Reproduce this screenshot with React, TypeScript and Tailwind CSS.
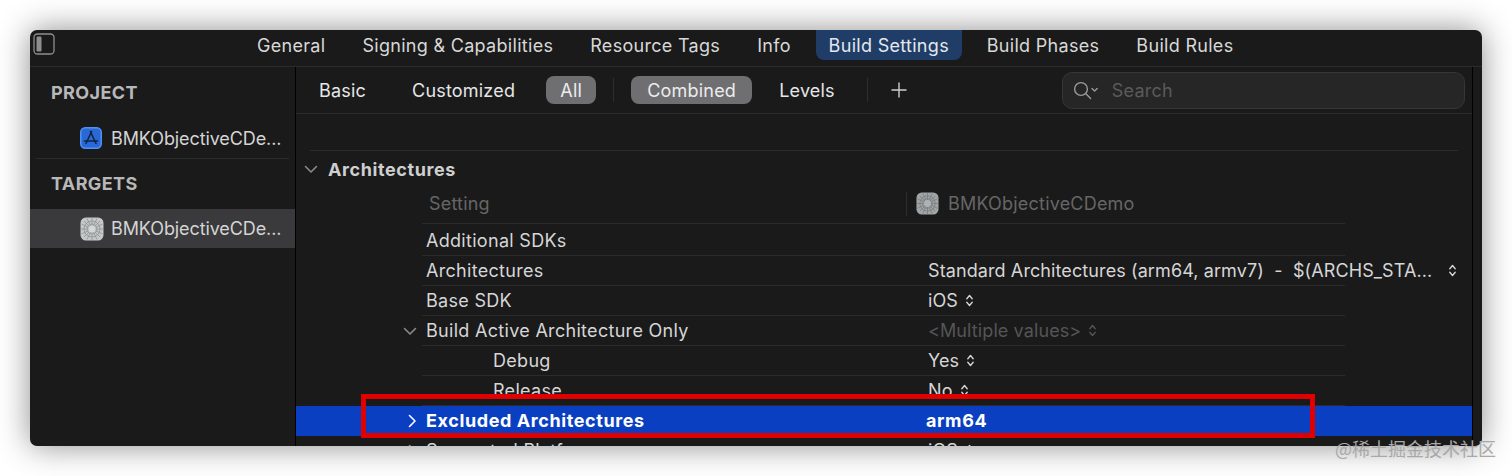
const tabs = ['General', 'Signing & Capabilities', 'Resource Tags', 'Info', 'Build Settings', 'Build Phases', 'Build Rules'];

function UpDown({ className }: { className?: string }) {
  return (
    <svg viewBox="0 0 10 16" className={`h-[15px] w-[9px] shrink-0 ${className ?? ''}`} fill="none" stroke="currentColor" strokeWidth="1.5" strokeLinecap="round" strokeLinejoin="round">
      <path d="M2 6l3-3.5L8 6" />
      <path d="M2 10l3 3.5L8 10" />
    </svg>
  );
}

function Chevron({ open, className }: { open?: boolean; className?: string }) {
  return (
    <svg viewBox="0 0 14 14" className={`h-[14px] w-[14px] ${className ?? ''}`} fill="none" stroke="currentColor" strokeWidth="1.6" strokeLinecap="round" strokeLinejoin="round">
      {open ? <path d="M1.5 4.5L7 10l5.5-5.5" /> : <path d="M4.5 1.5L10 7l-5.5 5.5" />}
    </svg>
  );
}

function TargetIcon({ className }: { className?: string }) {
  return (
    <svg viewBox="0 0 24 24" className={className}>
      <rect x="0.5" y="0.5" width="23" height="23" rx="5.5" fill="#c5c8c9" />
      <g fill="none" stroke="#8f9496" strokeWidth="0.8">
        <circle cx="12" cy="12" r="8" />
        <circle cx="12" cy="12" r="5" />
        <circle cx="12" cy="12" r="2.4" />
        <path d="M12 1v22M1 12h22M4 4l16 16M20 4L4 20M7 1.5l10 21M17 1.5l-10 21M1.5 7l21 10M1.5 17l21-10" />
      </g>
      <circle cx="12" cy="12" r="3.6" fill="#d5d8d9" />
    </svg>
  );
}

function AppIcon() {
  return (
    <svg viewBox="0 0 22 22" className="h-[22px] w-[22px] shrink-0">
      <rect x="0.75" y="0.75" width="20.5" height="20.5" rx="4.5" fill="#2a68d8" stroke="#4f93f2" strokeWidth="1.5" />
      <g fill="none" stroke="#10233f" strokeWidth="1.5" strokeLinecap="round">
        <path d="M11.6 4.5L6 16.5" />
        <path d="M10.4 4.5L16 16.5" />
        <path d="M4.5 14h13" />
      </g>
    </svg>
  );
}

function PanelIcon() {
  return (
    <svg viewBox="0 0 22 22" className="h-[22px] w-[22px] shrink-0">
      <rect x="1" y="1" width="20" height="20" rx="3.5" fill="none" stroke="#8e8e8e" strokeWidth="1.3" />
      <rect x="3.5" y="3.5" width="5" height="15" rx="1.2" fill="#8e8e8e" />
    </svg>
  );
}

function SidebarItem({ selected, icon }: { selected?: boolean; icon: React.ReactNode }) {
  return (
    <div className={`flex items-center pl-[50px] tracking-[-0.1px] text-[#d4d4d4] ${selected ? 'h-[39px] bg-[#3a3a3c]' : 'h-[40px]'}`}>
      <div className="flex w-[31px] shrink-0 items-center">{icon}</div>
      <span>BMKObjectiveCDe...</span>
    </div>
  );
}

function Row({ label, value, open, closed, indent, muted, wide }: { label: string; value?: string; open?: boolean; closed?: boolean; indent?: boolean; muted?: boolean; wide?: boolean }) {
  return (
    <div className="h-[30px] pl-[126px]">
      <div className="relative flex h-full w-[923px] items-center border-b border-[#2b2b2b] text-[#d6d6d6]">
        {open && <Chevron open className="absolute left-[-19px] text-[#8a8a8a]" />}
        {closed && <Chevron className="absolute left-[-17px] text-[#8a8a8a]" />}
        <span className={`w-[506px] shrink-0 tracking-[0.3px] ${indent ? 'pl-[71px]' : 'pl-[4px]'}`}>{label}</span>
        {value && (
          <span className={`flex items-center whitespace-nowrap tracking-[0.1px] ${wide ? 'gap-[16px]' : 'gap-[7px]'} ${muted ? 'text-[#555555]' : ''}`}>
            {value}
            <UpDown />
          </span>
        )}
      </div>
    </div>
  );
}

export default function App() {
  return (
    <div className="relative h-[476px] w-[1512px] overflow-hidden bg-white pl-[30px] pt-[30px] font-['Inter','Liberation_Sans',sans-serif] text-[18px]">
      <div className="flex h-[416px] w-[1452px] flex-col overflow-hidden rounded-[7px] bg-[#1a1a1b] shadow-[0_0_32px_rgba(0,0,0,0.45)]">
        <div className="flex h-[37px] shrink-0 border-b border-[#2c2c2c] pr-[10px]">
          <div className="w-[215px] pl-[3px] pt-[3px]">
            <PanelIcon />
          </div>
          <div className="flex h-[30px] gap-[13px] tracking-[0.3px] text-[#d8d8d8]">
            {tabs.map((t) => (
              <div key={t} className={`flex items-center justify-center whitespace-nowrap rounded-b-[8px] px-3 ${t === 'Build Settings' ? 'w-[146px] bg-[#1f3d66] text-[#e4e8ee]' : ''}`}>
                {t}
              </div>
            ))}
          </div>
        </div>

        <div className="flex min-h-0 flex-1">
          <div className="w-[266px] shrink-0 border-r border-black">
            <div className="flex h-[51px] items-center pl-[21px] font-bold tracking-[0.4px] text-[#b8b8b8]">PROJECT</div>
            <div className="px-[6px]">
              <div className="border-b border-[#2c2c2c]">
                <div className="-mx-[6px]">
                  <SidebarItem icon={<AppIcon />} />
                </div>
              </div>
            </div>
            <div className="flex h-[50px] items-center pb-[2px] pl-[21px] font-bold tracking-[0.4px] text-[#b8b8b8]">TARGETS</div>
            <SidebarItem selected icon={<TargetIcon className="h-[24px] w-[24px]" />} />
          </div>

          <div className="min-w-0 flex-1">
            <div className="flex h-[47px] items-center border-b border-[#2c2c2c] pl-[23px] tracking-[0.2px] text-[#e6e6e6]">
              <span>Basic</span>
              <span className="ml-[46px]">Customized</span>
              <span className="ml-[31px] flex h-[28px] w-[50px] items-center justify-center rounded-[8px] bg-[#6f6f72] text-[#ececec]">All</span>
              <span className="ml-[17px] h-[24px] w-px bg-[#2e2e2e]" />
              <span className="ml-[17px] flex h-[28px] w-[121px] items-center justify-center rounded-[8px] bg-[#6f6f72] text-[#ececec]">Combined</span>
              <span className="ml-[27px]">Levels</span>
              <span className="ml-[32px] h-[24px] w-px bg-[#2e2e2e]" />
              <svg viewBox="0 0 16 16" className="ml-[23px] h-[16px] w-[16px]" stroke="#cfcfcf" strokeWidth="1.4" fill="none">
                <path d="M8 0.5v15M0.5 8h15" />
              </svg>
              <div className="ml-[155px] flex h-[37px] w-[403px] items-center rounded-[10px] border border-[#363636] bg-[#262626] pl-[9px]">
                <svg viewBox="0 0 28 22" className="h-[22px] w-[28px]" fill="none" stroke="#9a9a9a" strokeWidth="1.4" strokeLinecap="round" strokeLinejoin="round">
                  <circle cx="9" cy="10" r="6.4" />
                  <path d="M13.6 14.6l5 5" />
                  <path d="M20 9.5l2.6 2.6 2.6-2.6" />
                </svg>
                <span className="ml-[12px] text-[#5a5a5a]">Search</span>
              </div>
            </div>

            <div className="pl-[14px] pr-[14px] pt-[36px]">
              <div className="border-t border-[#2c2c2c]" />
            </div>

            <div className="flex h-[36px] items-center pl-[8px] font-bold tracking-[0.6px] text-[#cfcfcf]">
              <Chevron open className="text-[#8a8a8a]" />
              <span className="ml-[10px]">Architectures</span>
            </div>

            <div className="pl-[126px]">
              <div className="flex h-[37px] w-[923px] items-center border-b border-[#2b2b2b] pb-[3px] tracking-[0.2px] text-[#666666]">
                <span className="w-[484px] shrink-0 pl-[7px]">Setting</span>
                <span className="h-[24px] w-px bg-[#2e2e2e]" />
                <TargetIcon className="ml-[9px] h-[23px] w-[23px] opacity-80" />
                <span className="ml-[9px]">BMKObjectiveCDemo</span>
              </div>
            </div>

            <div className="mt-[2px]">
              <Row label="Additional SDKs" />
              <Row label="Architectures" value={'Standard Architectures (arm64, armv7)\u00a0 -\u00a0 $(ARCHS_STA...'} wide />
              <Row label="Base SDK" value="iOS" />
              <Row label="Build Active Architecture Only" value="<Multiple values>" open muted />
              <Row label="Debug" value="Yes" indent />
              <Row label="Release" value="No" indent />
              <div className="flex h-[30px] items-center bg-[#0a3fc1] pb-px pl-[126px] font-bold tracking-[0.6px] text-white">
                <div className="relative flex items-center">
                  <Chevron className="absolute left-[-17px] text-white" />
                  <span className="w-[504px] shrink-0 pl-[4px]">Excluded Architectures</span>
                  <span>arm64</span>
                </div>
              </div>
              <Row label="Supported Platforms" value="iOS" closed />
            </div>
          </div>

          <div className="w-[10px] shrink-0 border-l border-black" />
        </div>
      </div>

      <div className="absolute left-[361px] top-[394px] h-[44px] w-[954px] border-[5px] border-[#e00000]" />
      <div className="absolute left-[1335px] top-[435px] whitespace-nowrap font-['Noto_Sans_CJK_SC',sans-serif] text-[18px] text-[#a8a8a8]">@稀土掘金技术社区</div>
    </div>
  );
}
